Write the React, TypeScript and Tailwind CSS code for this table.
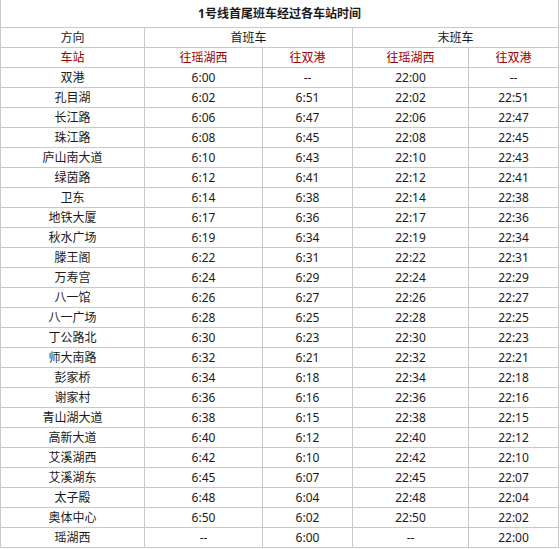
import React from "react";

type Row = [string, string, string, string, string];

const rows: Row[] = [
  ["双港", "6:00", "--", "22:00", "--"],
  ["孔目湖", "6:02", "6:51", "22:02", "22:51"],
  ["长江路", "6:06", "6:47", "22:06", "22:47"],
  ["珠江路", "6:08", "6:45", "22:08", "22:45"],
  ["庐山南大道", "6:10", "6:43", "22:10", "22:43"],
  ["绿茵路", "6:12", "6:41", "22:12", "22:41"],
  ["卫东", "6:14", "6:38", "22:14", "22:38"],
  ["地铁大厦", "6:17", "6:36", "22:17", "22:36"],
  ["秋水广场", "6:19", "6:34", "22:19", "22:34"],
  ["滕王阁", "6:22", "6:31", "22:22", "22:31"],
  ["万寿宫", "6:24", "6:29", "22:24", "22:29"],
  ["八一馆", "6:26", "6:27", "22:26", "22:27"],
  ["八一广场", "6:28", "6:25", "22:28", "22:25"],
  ["丁公路北", "6:30", "6:23", "22:30", "22:23"],
  ["师大南路", "6:32", "6:21", "22:32", "22:21"],
  ["彭家桥", "6:34", "6:18", "22:34", "22:18"],
  ["谢家村", "6:36", "6:16", "22:36", "22:16"],
  ["青山湖大道", "6:38", "6:15", "22:38", "22:15"],
  ["高新大道", "6:40", "6:12", "22:40", "22:12"],
  ["艾溪湖西", "6:42", "6:10", "22:42", "22:10"],
  ["艾溪湖东", "6:45", "6:07", "22:45", "22:07"],
  ["太子殿", "6:48", "6:04", "22:48", "22:04"],
  ["奥体中心", "6:50", "6:02", "22:50", "22:02"],
  ["瑶湖西", "--", "6:00", "--", "22:00"],
];

const cell = "h-[20px] flex items-center justify-center border-r border-b border-[#c8c8c8]";

export default function App() {
  return (
    <div
      className="w-[560px] h-[549px] bg-white text-[12px] text-[#1a1a1a] leading-none"
      style={{ fontFamily: '"Noto Sans", "Noto Sans CJK SC", sans-serif' }}
    >
      <div className="grid grid-cols-[144px_118px_90px_116px_90px] w-[559px] border-l border-[#c8c8c8]">
        <div className="col-span-5 h-[28px] flex items-center justify-center border-r border-b border-[#c8c8c8] font-bold pt-[1px]">
          1号线首尾班车经过各车站时间
        </div>

        <div className={cell}>方向</div>
        <div className={`${cell} col-span-2`}>首班车</div>
        <div className={`${cell} col-span-2`}>末班车</div>

        <div className={`${cell} text-[#990000]`}>车站</div>
        <div className={`${cell} text-[#990000]`}>往瑶湖西</div>
        <div className={`${cell} text-[#990000]`}>往双港</div>
        <div className={`${cell} text-[#990000]`}>往瑶湖西</div>
        <div className={`${cell} text-[#990000]`}>往双港</div>

        {rows.map((r) =>
          r.map((v, i) => (
            <div key={r[0] + i} className={cell}>
              {v}
            </div>
          ))
        )}
      </div>
    </div>
  );
}
